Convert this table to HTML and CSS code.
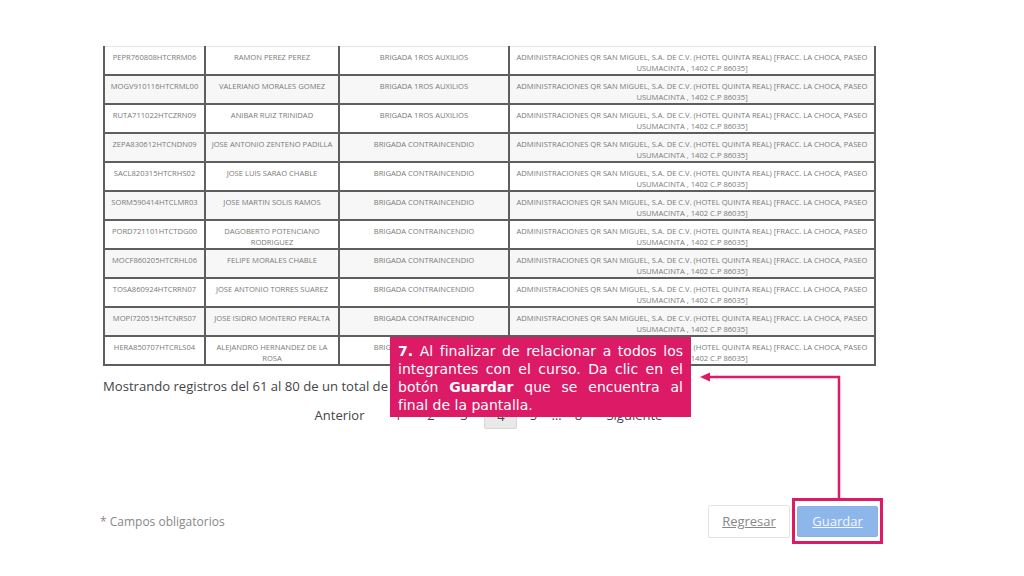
FILE: index.html
```html
<!DOCTYPE html>
<html lang="es">
<head>
<meta charset="utf-8">
<title>Relacionar integrantes</title>
<link rel="stylesheet" href="styles.css">
</head>
<body>
<div class="page">
  <table class="grid">
    <colgroup>
      <col class="c1"><col class="c2"><col class="c3"><col class="c4">
    </colgroup>
    <tbody>
      <tr><td>PEPR760808HTCRRM06</td><td>RAMON PEREZ PEREZ</td><td>BRIGADA 1ROS AUXILIOS</td><td>ADMINISTRACIONES QR SAN MIGUEL, S.A. DE C.V. (HOTEL QUINTA REAL) [FRACC. LA CHOCA, PASEO USUMACINTA , 1402 C.P 86035]</td></tr>
      <tr><td>MOGV910116HTCRML00</td><td>VALERIANO MORALES GOMEZ</td><td>BRIGADA 1ROS AUXILIOS</td><td>ADMINISTRACIONES QR SAN MIGUEL, S.A. DE C.V. (HOTEL QUINTA REAL) [FRACC. LA CHOCA, PASEO USUMACINTA , 1402 C.P 86035]</td></tr>
      <tr><td>RUTA711022HTCZRN09</td><td>ANIBAR RUIZ TRINIDAD</td><td>BRIGADA 1ROS AUXILIOS</td><td>ADMINISTRACIONES QR SAN MIGUEL, S.A. DE C.V. (HOTEL QUINTA REAL) [FRACC. LA CHOCA, PASEO USUMACINTA , 1402 C.P 86035]</td></tr>
      <tr><td>ZEPA830612HTCNDN09</td><td>JOSE ANTONIO ZENTENO PADILLA</td><td>BRIGADA CONTRAINCENDIO</td><td>ADMINISTRACIONES QR SAN MIGUEL, S.A. DE C.V. (HOTEL QUINTA REAL) [FRACC. LA CHOCA, PASEO USUMACINTA , 1402 C.P 86035]</td></tr>
      <tr><td>SACL820315HTCRHS02</td><td>JOSE LUIS SARAO CHABLE</td><td>BRIGADA CONTRAINCENDIO</td><td>ADMINISTRACIONES QR SAN MIGUEL, S.A. DE C.V. (HOTEL QUINTA REAL) [FRACC. LA CHOCA, PASEO USUMACINTA , 1402 C.P 86035]</td></tr>
      <tr><td>SORM590414HTCLMR03</td><td>JOSE MARTIN SOLIS RAMOS</td><td>BRIGADA CONTRAINCENDIO</td><td>ADMINISTRACIONES QR SAN MIGUEL, S.A. DE C.V. (HOTEL QUINTA REAL) [FRACC. LA CHOCA, PASEO USUMACINTA , 1402 C.P 86035]</td></tr>
      <tr><td>PORD721101HTCTDG00</td><td>DAGOBERTO POTENCIANO RODRIGUEZ</td><td>BRIGADA CONTRAINCENDIO</td><td>ADMINISTRACIONES QR SAN MIGUEL, S.A. DE C.V. (HOTEL QUINTA REAL) [FRACC. LA CHOCA, PASEO USUMACINTA , 1402 C.P 86035]</td></tr>
      <tr><td>MOCF860205HTCRHL06</td><td>FELIPE MORALES CHABLE</td><td>BRIGADA CONTRAINCENDIO</td><td>ADMINISTRACIONES QR SAN MIGUEL, S.A. DE C.V. (HOTEL QUINTA REAL) [FRACC. LA CHOCA, PASEO USUMACINTA , 1402 C.P 86035]</td></tr>
      <tr><td>TOSA860924HTCRRN07</td><td>JOSE ANTONIO TORRES SUAREZ</td><td>BRIGADA CONTRAINCENDIO</td><td>ADMINISTRACIONES QR SAN MIGUEL, S.A. DE C.V. (HOTEL QUINTA REAL) [FRACC. LA CHOCA, PASEO USUMACINTA , 1402 C.P 86035]</td></tr>
      <tr><td>MOPI720515HTCNRS07</td><td>JOSE ISIDRO MONTERO PERALTA</td><td>BRIGADA CONTRAINCENDIO</td><td>ADMINISTRACIONES QR SAN MIGUEL, S.A. DE C.V. (HOTEL QUINTA REAL) [FRACC. LA CHOCA, PASEO USUMACINTA , 1402 C.P 86035]</td></tr>
      <tr><td>HERA850707HTCRLS04</td><td>ALEJANDRO HERNANDEZ DE LA ROSA</td><td>BRIGADA CONTRAINCENDIO</td><td>ADMINISTRACIONES QR SAN MIGUEL, S.A. DE C.V. (HOTEL QUINTA REAL) [FRACC. LA CHOCA, PASEO USUMACINTA , 1402 C.P 86035]</td></tr>
    </tbody>
  </table>

  <p class="info">Mostrando registros del 61 al 80 de un total de 153 registros</p>

  <nav class="pager">
    <a class="pg pg-prev">Anterior</a>
    <a class="pg">1</a>
    <a class="pg">2</a>
    <a class="pg">3</a>
    <a class="pg pg-active">4</a>
    <a class="pg pg-5">5</a>
    <span class="pg pg-dots">…</span>
    <a class="pg pg-8">8</a>
    <a class="pg pg-next">Siguiente</a>
  </nav>

  <div class="footer">
    <span class="req">* Campos obligatorios</span>
    <div class="actions">
      <a class="btn btn-back">Regresar</a>
      <span class="highlight"><a class="btn btn-save">Guardar</a></span>
    </div>
  </div>

  <div class="callout">
    <span class="cl-line"><b>7.</b> Al finalizar de relacionar a todos los</span>
    <span class="cl-line">integrantes con el curso. Da clic en el</span>
    <span class="cl-line">botón <b>Guardar</b> que se encuentra al</span>
    <span class="cl-line cl-last">final de la pantalla.</span>
  </div>

  <svg class="arrow" width="150" height="128" viewBox="0 0 150 128" aria-hidden="true">
    <polyline points="12,5 142,5 142,128" fill="none" stroke="#dc1a66" stroke-width="2.5"/>
    <polygon points="3,5 13,0.5 13,9.5" fill="#dc1a66"/>
  </svg>
</div>
</body>
</html>
```

FILE: styles.css
```css
html, body {
  margin: 0;
  padding: 0;
  background: #ffffff;
}

body {
  font-family: "Open Sans", "Liberation Sans", sans-serif;
  color: #444;
  width: 1024px;
  height: 576px;
  overflow: hidden;
}

.page {
  position: relative;
  padding: 46px 0 0 103px;
  width: 781px;
}

.grid {
  width: 771px;
  table-layout: fixed;
  border-collapse: collapse;
}

.c1 { width: 101px; }
.c2 { width: 134px; }
.c3 { width: 170px; }
.c4 { width: 366px; }

.grid td {
  border: 2px solid #5e5e5e;
  padding: 5px 4px 0;
  height: 22px;
  vertical-align: top;
  text-align: center;
  font-size: 7.6px;
  line-height: 11px;
  color: #7a7a7a;
  overflow: hidden;
  white-space: normal;
}

.grid tr:first-child td {
  border-top: 1px solid #e6e6e6;
}

.grid tr:nth-child(even) td {
  background: #f7f7f7;
}

.info {
  margin: 10px 0 0;
  font-size: 13.1px;
  line-height: 20px;
  color: #444;
  white-space: nowrap;
}

.pager {
  width: 771px;
  margin-top: 5px;
  display: flex;
  justify-content: center;
  align-items: center;
  font-size: 13px;
  color: #444;
}

.pg {
  display: block;
  width: 33px;
  height: 28px;
  line-height: 28px;
  text-align: center;
  box-sizing: border-box;
}

.pg-prev {
  width: auto;
  padding: 0 17px 0 0;
}

.pg-next {
  width: auto;
  padding: 0 0 0 13px;
}

.pg-active {
  margin-left: 4px;
  background: #e9e9e9;
  border: 1px solid #d6d6d6;
  border-radius: 2px;
}

.pg-5 { width: 32px; }
.pg-dots { width: 14px; }
.pg-8 { width: 30px; }

.footer {
  margin: 69px 0 0 -3px;
  width: 783px;
  display: flex;
  justify-content: space-between;
  align-items: center;
}

.req {
  font-size: 12px;
  color: #888;
}

.actions {
  display: flex;
  align-items: center;
  gap: 2px;
}

.btn {
  display: block;
  box-sizing: border-box;
  height: 33px;
  line-height: 31px;
  font-size: 13px;
  text-align: center;
  text-decoration: underline;
  border-radius: 2px;
}

.btn-back {
  width: 82px;
  color: #888;
  border: 1px solid #e4e4e4;
  background: #fff;
}

.highlight {
  display: block;
  border: 3px solid #dc1a66;
  padding: 5px 2px 4px 2px;
}

.btn-save {
  width: 81px;
  height: 31px;
  line-height: 29px;
  color: #f4f8ff;
  background: #8db6ea;
  border: 1px solid #86b0e6;
}

.callout {
  position: absolute;
  left: 390px;
  top: 337px;
  width: 301px;
  height: 80px;
  box-sizing: border-box;
  padding: 5px 8px 0 8px;
  background: #dc1a66;
  color: #fff;
  font-family: "DejaVu Sans", "Noto Sans", sans-serif;
  font-size: 14px;
  line-height: 18px;
}

.cl-line {
  display: block;
  text-align: justify;
  text-align-last: justify;
  white-space: nowrap;
}

.cl-line.cl-last {
  text-align-last: left;
}

.callout b {
  font-weight: bold;
}

.arrow {
  position: absolute;
  left: 697px;
  top: 372px;
}
```
